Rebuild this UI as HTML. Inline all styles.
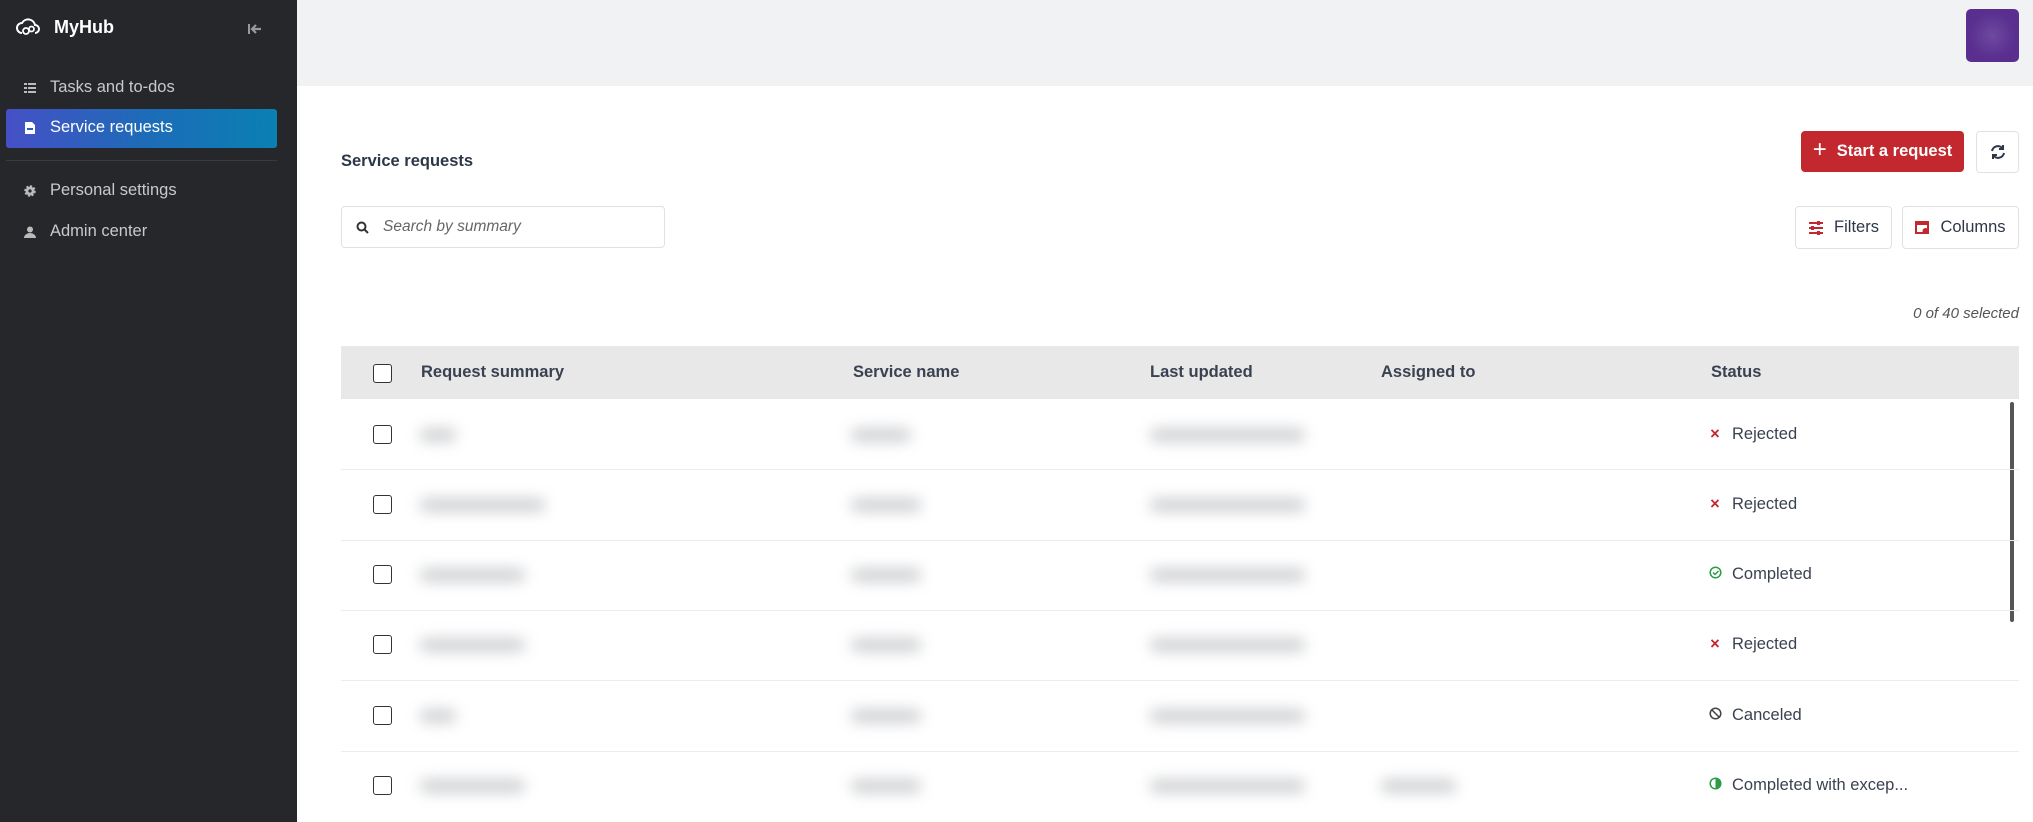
<!DOCTYPE html>
<html><head><meta charset="utf-8"><style>
*{box-sizing:border-box;margin:0;padding:0}
body{width:2033px;height:822px;overflow:hidden;font-family:"Liberation Sans",sans-serif;background:#fff;position:relative;color:#2d3748}
.sb{position:absolute;left:0;top:0;width:297px;height:822px;background:#26272b}
.logo{position:absolute;left:16px;top:16px;display:flex;align-items:center;color:#fff;font-weight:bold;font-size:18px}
.nav{position:absolute;left:24px;color:#c8c9cc;font-size:16.5px;display:flex;align-items:center}
.nav svg{margin-right:14px}
.act{position:absolute;left:6px;top:109px;width:271px;height:39px;border-radius:3px;background:linear-gradient(90deg,#4650c6,#1e6bb8 50%,#0a80b3)}
.hdr{position:absolute;left:297px;top:0;right:0;height:86px;background:#f1f2f4}
.av{position:absolute;left:1966px;top:9px;width:53px;height:53px;border-radius:5px;background:radial-gradient(circle,#6e4aa0,#5a2f90 60%,#5b2d8e)}
.btn{position:absolute;border:1px solid #dfe1e5;border-radius:4px;background:#fff;display:flex;align-items:center;justify-content:center;font-size:16.5px;color:#2d3748;font-weight:bold}
.th{position:absolute;left:341px;top:346px;width:1678px;height:53px;background:#e8e8e9}
.cb{position:absolute;width:19px;height:19px;border:1.5px solid #333;border-radius:3px;background:#fff}
.tt{position:absolute;font-size:16.5px;font-weight:bold;color:#3a4250}
.row{position:absolute;left:341px;width:1678px;height:1px;background:#ececec}
.bl{position:absolute;height:14px;background:#c8cacd;filter:blur(7px);border-radius:6px;opacity:.85}
.st{position:absolute;left:1708px;font-size:16.5px;color:#3a4250;display:flex;align-items:center}
.st span.i{width:14px;display:inline-block;margin-right:10px;text-align:center;font-weight:bold}
</style></head><body>
<div class="sb">
 <div class="logo"><svg width="24" height="22" viewBox="0 0 24 22"><path d="M6 17a5 5 0 0 1 0-10 7 7 0 0 1 13 2 4 4 0 0 1 0 8" fill="none" stroke="#fff" stroke-width="2"/><circle cx="10" cy="15" r="3" fill="none" stroke="#fff" stroke-width="1.8"/><circle cx="15.5" cy="13" r="2.5" fill="none" stroke="#fff" stroke-width="1.8"/></svg><span style="margin-left:14px">MyHub</span></div>
 <svg style="position:absolute;left:247px;top:22px" width="16" height="14" viewBox="0 0 16 14"><rect x="1" y="2" width="2" height="10" fill="#999"/><path d="M14 7H6M9 3L5 7l4 4" stroke="#999" stroke-width="2.2" fill="none"/></svg>
 <div class="nav" style="top:78px"><svg width="12" height="10"><g fill="#bbb"><rect y="0" width="3" height="2"/><rect x="4" y="0" width="8" height="2"/><rect y="4" width="3" height="2"/><rect x="4" y="4" width="8" height="2"/><rect y="8" width="3" height="2"/><rect x="4" y="8" width="8" height="2"/></g></svg>Tasks and to-dos</div>
 <div class="act"></div>
 <div class="nav" style="top:118px;color:#fff"><svg width="12" height="13"><path d="M1 1h7l3 3v9H1z" fill="#fff"/><rect x="3" y="7" width="6" height="2" fill="#2a5fc0"/></svg>Service requests</div>
 <div style="position:absolute;left:6px;top:160px;width:271px;height:1px;background:#3a3b40"></div>
 <div class="nav" style="top:181px"><svg width="12" height="12" viewBox="0 0 12 12"><circle cx="6" cy="6" r="4.5" fill="#bbb" stroke="#bbb" stroke-width="2.5" stroke-dasharray="2 1.5"/><circle cx="6" cy="6" r="1.6" fill="#26272b"/></svg>Personal settings</div>
 <div class="nav" style="top:222px"><svg width="12" height="12"><circle cx="6" cy="3.5" r="3" fill="#bbb"/><path d="M0 12a6 5 0 0 1 12 0z" fill="#bbb"/></svg>Admin center</div>
</div>
<div class="hdr"></div><div class="av"></div>
<div style="position:absolute;left:341px;top:152px;font-size:16.5px;font-weight:bold;color:#2d3748">Service requests</div>
<div class="btn" style="left:1801px;top:131px;width:163px;height:41px;background:#c3282f;border-color:#c3282f;color:#fff"><span style="font-size:24px;font-weight:normal;margin-right:10px;margin-top:-3px">+</span>Start a request</div>
<div class="btn" style="left:1976px;top:131px;width:43px;height:42px"><svg width="16" height="16" viewBox="0 0 16 16" fill="none" stroke="#2d3748" stroke-width="2"><path d="M2 7a6 6 0 0 1 11-2M14 9a6 6 0 0 1-11 2"/><path d="M13 1v4H9M3 15v-4h4"/></svg></div>
<div style="position:absolute;left:341px;top:206px;width:324px;height:42px;border:1px solid #dfe1e5;border-radius:4px;display:flex;align-items:center;padding-left:14px;font-size:15.5px;font-style:italic;color:#666"><svg width="13" height="13" style="margin-right:14px"><circle cx="5.5" cy="5.5" r="4" fill="none" stroke="#333" stroke-width="2"/><path d="M8.5 8.5l3.5 3.5" stroke="#333" stroke-width="2"/></svg>Search by summary</div>
<div class="btn" style="left:1795px;top:206px;width:97px;height:43px;font-weight:normal"><svg width="16" height="14" style="margin-right:10px"><g stroke="#c3282f" stroke-width="2"><path d="M1 2h14M1 7h14M1 12h14"/></g><g fill="#c3282f"><rect x="9" y="0" width="3" height="4"/><rect x="3" y="5" width="3" height="4"/><rect x="9" y="10" width="3" height="4"/></g></svg>Filters</div>
<div class="btn" style="left:1902px;top:206px;width:117px;height:43px;font-weight:normal"><svg width="15" height="14" style="margin-right:10px"><rect x="1" y="1" width="12" height="11" fill="none" stroke="#c3282f" stroke-width="2"/><rect x="1" y="1" width="12" height="3" fill="#c3282f"/><circle cx="10.5" cy="10" r="3" fill="#c3282f"/></svg>Columns</div>
<div style="position:absolute;right:14px;top:305px;font-size:15px;font-style:italic;color:#555">0 of 40 selected</div>
<div class="th"></div>
<div class="cb" style="left:373px;top:364px"></div>
<div class="tt" style="left:421px;top:363px">Request summary</div>
<div class="tt" style="left:853px;top:363px">Service name</div>
<div class="tt" style="left:1150px;top:363px">Last updated</div>
<div class="tt" style="left:1381px;top:363px">Assigned to</div>
<div class="tt" style="left:1711px;top:363px">Status</div>
<div style="position:absolute;left:2010px;top:402px;width:4px;height:220px;background:#555;border-radius:2px"></div>

<div class="cb" style="left:373px;top:425px"></div><div class="bl" style="left:420px;top:428px;width:36px"></div><div class="bl" style="left:851px;top:428px;width:60px"></div><div class="bl" style="left:1150px;top:428px;width:155px"></div>
<div class="st" style="top:425px"><span class="i" style="color:#c3282f">×</span>Rejected</div>
<div class="row" style="top:469px"></div>
<div class="cb" style="left:373px;top:495px"></div><div class="bl" style="left:420px;top:498px;width:125px"></div><div class="bl" style="left:851px;top:498px;width:70px"></div><div class="bl" style="left:1150px;top:498px;width:155px"></div>
<div class="st" style="top:495px"><span class="i" style="color:#c3282f">×</span>Rejected</div>
<div class="row" style="top:540px"></div>
<div class="cb" style="left:373px;top:565px"></div><div class="bl" style="left:420px;top:568px;width:105px"></div><div class="bl" style="left:851px;top:568px;width:70px"></div><div class="bl" style="left:1150px;top:568px;width:155px"></div>
<div class="st" style="top:565px"><span class="i"><svg width="13" height="13"><circle cx="6.5" cy="6.5" r="5.3" fill="none" stroke="#2a9d46" stroke-width="1.5"/><path d="M4 6.5l2 2 3.5-3.5" fill="none" stroke="#2a9d46" stroke-width="1.5"/></svg></span>Completed</div>
<div class="row" style="top:610px"></div>
<div class="cb" style="left:373px;top:635px"></div><div class="bl" style="left:420px;top:638px;width:105px"></div><div class="bl" style="left:851px;top:638px;width:70px"></div><div class="bl" style="left:1150px;top:638px;width:155px"></div>
<div class="st" style="top:635px"><span class="i" style="color:#c3282f">×</span>Rejected</div>
<div class="row" style="top:680px"></div>
<div class="cb" style="left:373px;top:706px"></div><div class="bl" style="left:420px;top:709px;width:36px"></div><div class="bl" style="left:851px;top:709px;width:70px"></div><div class="bl" style="left:1150px;top:709px;width:155px"></div>
<div class="st" style="top:706px"><span class="i"><svg width="13" height="13"><circle cx="6.5" cy="6.5" r="5.3" fill="none" stroke="#444" stroke-width="1.5"/><path d="M3 3l7 7" stroke="#444" stroke-width="1.5"/></svg></span>Canceled</div>
<div class="row" style="top:751px"></div>
<div class="cb" style="left:373px;top:776px"></div><div class="bl" style="left:420px;top:779px;width:105px"></div><div class="bl" style="left:851px;top:779px;width:70px"></div><div class="bl" style="left:1150px;top:779px;width:155px"></div><div class="bl" style="left:1381px;top:779px;width:75px"></div>
<div class="st" style="top:776px"><span class="i"><svg width="13" height="13"><circle cx="6.5" cy="6.5" r="5.3" fill="none" stroke="#2a9d46" stroke-width="1.5"/><path d="M6.5 1.2a5.3 5.3 0 0 1 0 10.6z" fill="#2a9d46"/></svg></span>Completed with excep...</div>
</body></html>
